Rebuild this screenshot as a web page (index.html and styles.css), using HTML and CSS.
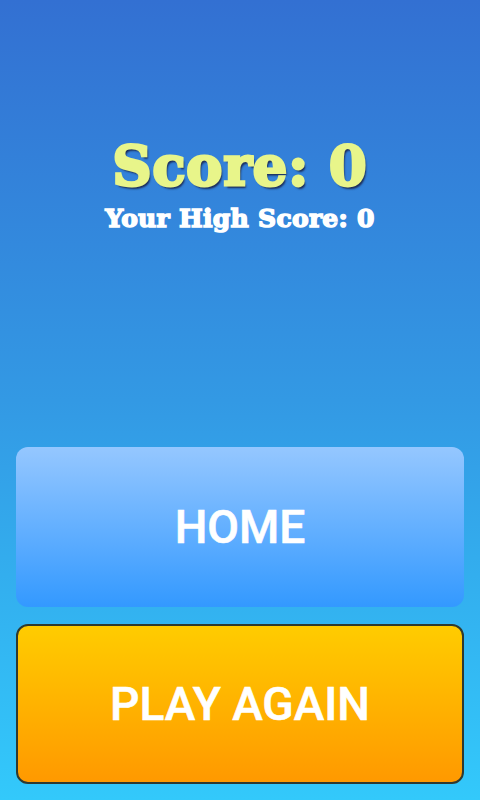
FILE: index.html
```html
<!DOCTYPE html>
<html>
<head>
<meta charset="utf-8">
<link rel="stylesheet" href="styles.css">
</head>
<body>
<div class="screen">
  <div class="scores">
    <div class="score">Score: 0</div>
    <div class="high">Your High Score: 0</div>
  </div>
  <div class="buttons">
    <div class="btn home">HOME</div>
    <div class="btn play">PLAY AGAIN</div>
  </div>
</div>
</body>
</html>
```
FILE: styles.css
```css
html, body {
  margin: 0;
  padding: 0;
}
.screen {
  width: 480px;
  height: 800px;
  background: linear-gradient(to bottom, #3370d2 0%, #3399e4 50%, #33c9fb 100%);
  display: flex;
  flex-direction: column;
  justify-content: space-between;
  box-sizing: border-box;
  padding: 0 16px 16px;
}
.scores {
  display: flex;
  flex-direction: column;
  align-items: center;
  padding-top: 134px;
}
.score {
  font-family: "DejaVu Serif", serif;
  font-weight: bold;
  font-size: 54px;
  line-height: 64px;
  color: #e8f58a;
  -webkit-text-stroke: 3px #e8f58a;
  text-shadow: 2px 3px 2px #1b2a55;
  letter-spacing: 1px;
}
.high {
  font-family: "DejaVu Serif", serif;
  font-weight: bold;
  font-size: 25px;
  line-height: 30px;
  color: #ffffff;
  -webkit-text-stroke: 1.5px #ffffff;
  letter-spacing: 0.3px;
  margin-top: 6px;
}
.buttons {
  display: flex;
  flex-direction: column;
  gap: 17px;
}
.btn {
  height: 160px;
  border-radius: 12px;
  display: flex;
  align-items: center;
  justify-content: center;
  font-family: Roboto, "Liberation Sans", sans-serif;
  font-weight: 500;
  font-size: 46px;
  color: #ffffff;
  -webkit-text-stroke: 0.6px #ffffff;
  box-sizing: border-box;
}
.home {
  background: linear-gradient(to bottom, #95c7ff, #3399ff);
}
.play {
  background: linear-gradient(to bottom, #ffcc00, #ff9900);
  border: 2px solid #2f3a30;
}
```
